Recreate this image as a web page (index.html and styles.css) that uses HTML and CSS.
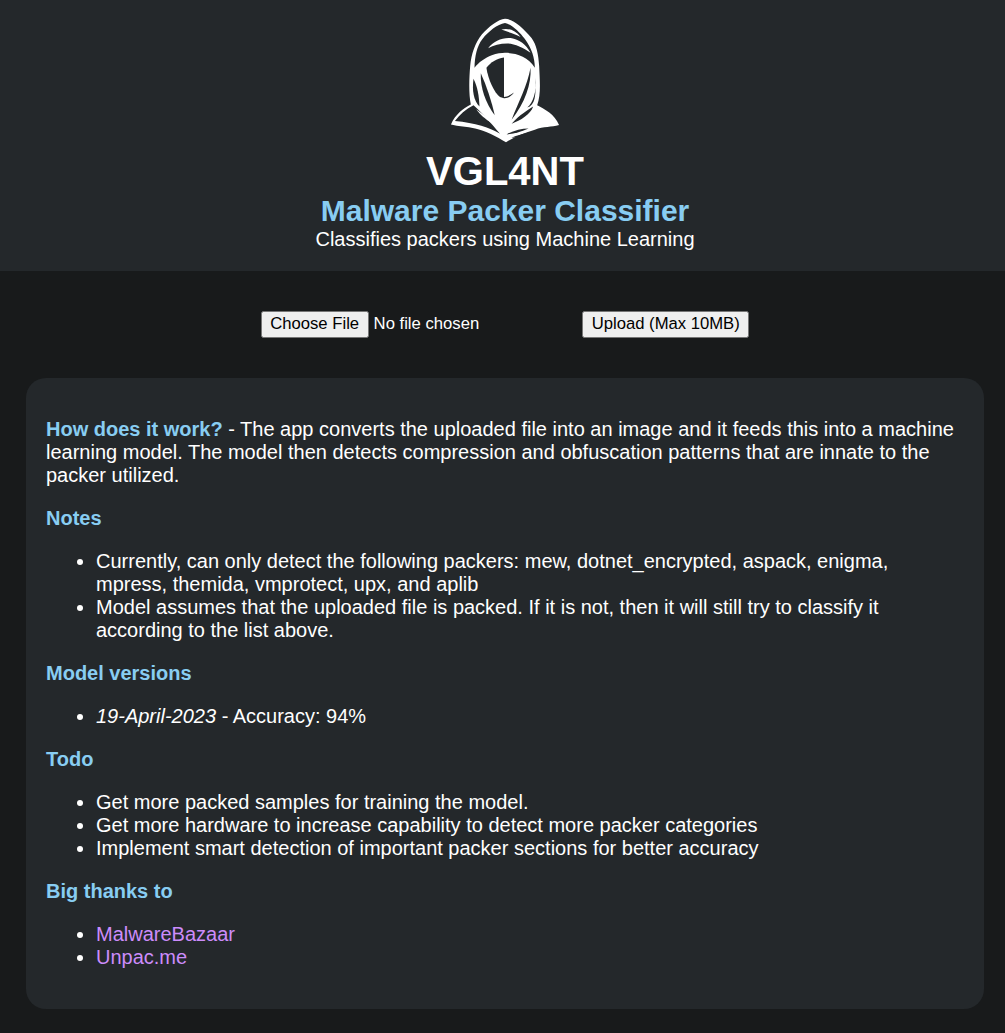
FILE: index.html
```html
<!DOCTYPE html>
<html lang="en">
<head>
    <meta charset="UTF-8">
    <meta name="viewport" content="width=device-width, initial-scale=1.0">
    <title>VGL4NT Malware Packer Classifier</title>
    <link rel="stylesheet" href="styles.css">
</head>
<body>
    <header class="Site-Header">
        <svg class="Logo" viewBox="90 55 330 377" aria-label="Hooded figure logo">
            <path class="Logo-White" d="M255 57 C280 58 310 85 335 115 C350 135 356 165 358 200 C360 245 364 285 352 318 C375 330 405 345 418 378 C395 385 372 382 345 392 C315 402 285 412 258 430 C230 412 195 395 165 388 C140 382 115 382 92 376 C105 345 130 328 152 316 C145 285 147 235 150 200 C153 165 165 130 185 105 C205 82 235 58 255 57 Z"/>
            <path class="Logo-Dark" d="M255 70 C232 74 205 95 187 118 C170 140 164 170 163 205 C175 188 195 175 215 167 C230 162 245 160 255 160 C285 160 325 170 345 205 C345 175 335 145 315 118 C298 96 275 74 255 70 Z"/>
            <path class="Logo-White" d="M204 146 C220 124 250 112 276 116 C298 120 318 134 332 160 C310 145 284 132 262 132 C240 132 220 138 204 146 Z"/>
            <path class="Logo-White" d="M244 90 C264 84 286 92 302 112 C284 102 264 98 244 90 Z"/>
            <path class="Logo-Dark" d="M252 174 C230 177 212 188 199 205 C204 240 222 280 240 293 L252 297 Z"/>
            <path class="Logo-Dark" d="M252 293 C262 292 272 288 282 280 C274 292 262 298 252 297 Z"/>
            <path class="Logo-Dark" d="M182 222 C180 265 196 312 224 348 C214 305 200 262 182 222 Z"/>
            <path class="Logo-Dark" d="M160 238 C155 275 161 304 178 322 C177 290 172 262 160 238 Z"/>
            <path class="Logo-Dark" d="M104 366 C118 346 136 330 160 318 C184 340 210 368 240 404 C210 386 165 372 104 366 Z"/>
            <path class="Logo-White" d="M168 330 C186 342 204 356 224 376 C204 366 184 352 168 330 Z"/>
            <path class="Logo-Dark" d="M332 205 C335 255 315 310 275 362 C295 310 322 260 332 205 Z"/>
            <path class="Logo-Dark" d="M346 235 C352 275 340 310 322 325 C345 318 350 290 346 235 Z"/>
            <path class="Logo-Dark" d="M275 374 C300 346 325 332 340 322 C332 346 302 364 275 374 Z"/>
            <path class="Logo-Dark" d="M260 406 C280 394 305 388 326 388 C305 398 282 404 260 406 Z"/>
            <path class="Logo-Dark" d="M274 416 C292 408 310 404 326 400 C310 410 292 416 274 416 Z"/>
        </svg>
        <h1 class="Site-Title">VGL4NT</h1>
        <h2 class="Site-Subtitle">Malware Packer Classifier</h2>
        <p class="Site-Tagline">Classifies packers using Machine Learning</p>
    </header>

    <form class="Upload-Form" method="post" onsubmit="return false">
        <input type="file" name="File" class="File-Input">
        <input type="submit" value="Upload (Max 10MB)" class="Upload-Button">
    </form>

    <section class="Info-Card">
        <p><span class="Accent">How does it work?</span> - The app converts the uploaded file into an image and it feeds this into a machine learning model. The model then detects compression and obfuscation patterns that are innate to the packer utilized.</p>

        <p class="Accent">Notes</p>
        <ul>
            <li>Currently, can only detect the following packers: mew, dotnet_encrypted, aspack, enigma, mpress, themida, vmprotect, upx, and aplib</li>
            <li>Model assumes that the uploaded file is packed. If it is not, then it will still try to classify it according to the list above.</li>
        </ul>

        <p class="Accent">Model versions</p>
        <ul>
            <li><em>19-April-2023</em> - Accuracy: 94%</li>
        </ul>

        <p class="Accent">Todo</p>
        <ul>
            <li>Get more packed samples for training the model.</li>
            <li>Get more hardware to increase capability to detect more packer categories</li>
            <li>Implement smart detection of important packer sections for better accuracy</li>
        </ul>

        <p class="Accent">Big thanks to</p>
        <ul>
            <li><a href="#">MalwareBazaar</a></li>
            <li><a href="#">Unpac.me</a></li>
        </ul>
    </section>
</body>
</html>
```

FILE: styles.css
```css
*{
    box-sizing: border-box;
    font-family: "Liberation Sans", Arial, Helvetica, sans-serif;
}
body{
    margin: 0;
    background-color: #181a1b;
    color: #fff;
}
.Site-Header{
    height: 271px;
    padding: 18px 0 0 5px;
    background-color: #24282b;
    text-align: center;
}
.Logo{
    display: block;
    width: 110px;
    height: 125px;
    margin: 0 auto 5px;
}
.Logo-White{
    fill: #fff;
}
.Logo-Dark{
    fill: #24282b;
}
.Site-Title{
    margin: 0;
    font-size: 40px;
    line-height: 46px;
}
.Site-Subtitle{
    margin: 0;
    font-size: 30px;
    line-height: 34px;
    color: #88cdf2;
}
.Site-Tagline{
    margin: 0;
    font-size: 20px;
    line-height: 23px;
}
.Upload-Form{
    height: 107px;
    padding: 40px 0 0 5px;
    text-align: center;
}
.File-Input, .Upload-Button{
    zoom: 1.25;
    font-size: 13.333px;
}
.File-Input{
    color: #fff;
}
.Upload-Button{
    margin-left: 1.6px;
    color: #000;
}
.Info-Card{
    margin: 0 21px 0 26px;
    padding: 20px;
    border-radius: 20px;
    background-color: #24282b;
    font-size: 20px;
}
.Info-Card p, .Info-Card ul{
    margin: 20px 0;
}
.Info-Card ul{
    padding-left: 50px;
}
.Accent{
    color: #88cdf2;
    font-weight: bold;
}
.Info-Card a{
    color: #cc8cfb;
    text-decoration: none;
}
```
